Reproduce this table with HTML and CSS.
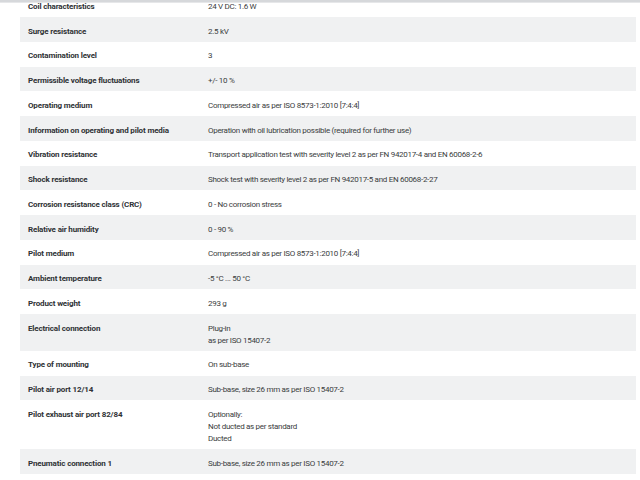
FILE: index.html
```html
<!DOCTYPE html>
<html lang="en">
<head>
<meta charset="utf-8">
<title>Technical data</title>
<link rel="stylesheet" href="styles.css">
</head>
<body>
<div class="topbar"></div>
<div class="specs">
  <div class="row"><div class="label">Coil characteristics</div><div class="value">24 V DC: 1.6 W</div></div>
  <div class="row"><div class="label">Surge resistance</div><div class="value">2.5 kV</div></div>
  <div class="row"><div class="label">Contamination level</div><div class="value">3</div></div>
  <div class="row"><div class="label">Permissible voltage fluctuations</div><div class="value">+/- 10 %</div></div>
  <div class="row"><div class="label">Operating medium</div><div class="value">Compressed air as per ISO 8573-1:2010 [7:4:4]</div></div>
  <div class="row"><div class="label">Information on operating and pilot media</div><div class="value">Operation with oil lubrication possible (required for further use)</div></div>
  <div class="row"><div class="label">Vibration resistance</div><div class="value">Transport application test with severity level 2 as per FN 942017-4 and EN 60068-2-6</div></div>
  <div class="row"><div class="label">Shock resistance</div><div class="value">Shock test with severity level 2 as per FN 942017-5 and EN 60068-2-27</div></div>
  <div class="row"><div class="label">Corrosion resistance class (CRC)</div><div class="value">0 - No corrosion stress</div></div>
  <div class="row"><div class="label">Relative air humidity</div><div class="value">0 - 90 %</div></div>
  <div class="row"><div class="label">Pilot medium</div><div class="value">Compressed air as per ISO 8573-1:2010 [7:4:4]</div></div>
  <div class="row"><div class="label">Ambient temperature</div><div class="value">-5 °C ... 50 °C</div></div>
  <div class="row"><div class="label">Product weight</div><div class="value">293 g</div></div>
  <div class="row"><div class="label">Electrical connection</div><div class="value">Plug-in<br>as per ISO 15407-2</div></div>
  <div class="row"><div class="label">Type of mounting</div><div class="value">On sub-base</div></div>
  <div class="row"><div class="label">Pilot air port 12/14</div><div class="value">Sub-base, size 26 mm as per ISO 15407-2</div></div>
  <div class="row"><div class="label">Pilot exhaust air port 82/84</div><div class="value">Optionally:<br>Not ducted as per standard<br>Ducted</div></div>
  <div class="row"><div class="label">Pneumatic connection 1</div><div class="value">Sub-base, size 26 mm as per ISO 15407-2</div></div>
</div>
</body>
</html>
```
FILE: styles.css
```css
html, body {
  margin: 0;
  padding: 0;
  background: #ffffff;
}
body {
  font-family: Roboto, "Liberation Sans", sans-serif;
  font-size: 8px;
  line-height: 12px;
  color: #333333;
  overflow: hidden;
}
.topbar {
  position: fixed;
  top: 0;
  left: 0;
  right: 0;
  height: 2px;
  background: #d6d8db;
  border-bottom: 1px solid #e6e7e9;
  z-index: 2;
}
.specs {
  margin: -7.75px 4px 0 20px;
  display: flex;
  flex-direction: column;
}
.row {
  display: grid;
  grid-template-columns: 180px 1fr;
  padding: 8.5px 0 4.25px 8px;
}
.row:nth-child(even) {
  background: #f0f1f2;
}
.label {
  font-weight: 700;
  color: #2f3235;
  letter-spacing: -0.15px;
}
.value {
  color: #3a3d40;
  letter-spacing: -0.3px;
}
```
